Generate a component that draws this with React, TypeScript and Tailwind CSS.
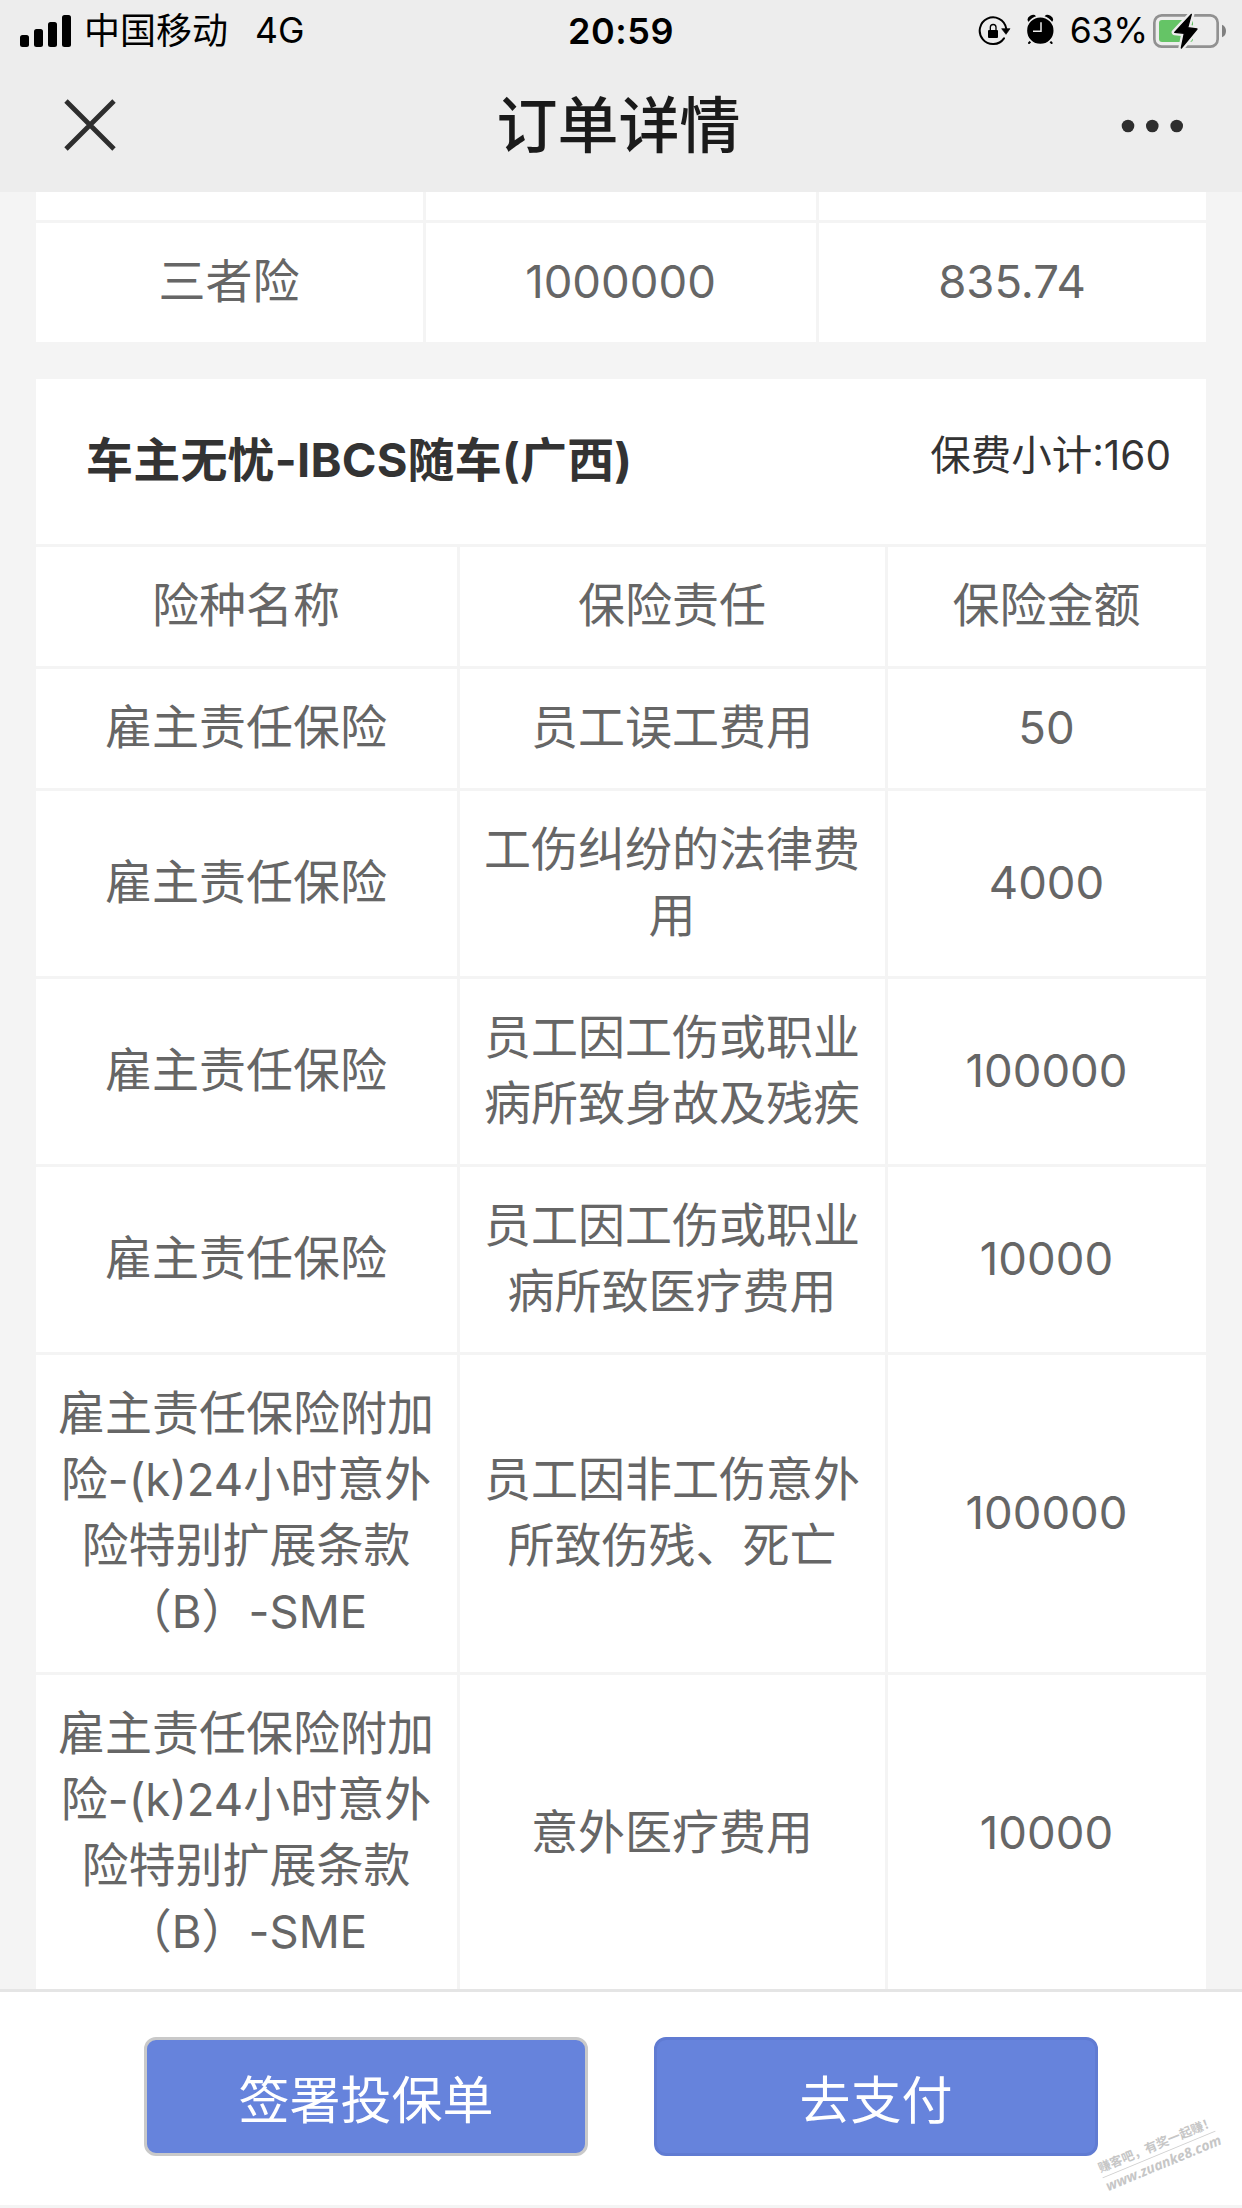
import React from "react";

interface CoverageRow {
  name: string;
  duty: string;
  amount: string;
}

const rows: CoverageRow[] = [
  { name: "险种名称", duty: "保险责任", amount: "保险金额" },
  { name: "雇主责任保险", duty: "员工误工费用", amount: "50" },
  { name: "雇主责任保险", duty: "工伤纠纷的法律费用", amount: "4000" },
  { name: "雇主责任保险", duty: "员工因工伤或职业病所致身故及残疾", amount: "100000" },
  { name: "雇主责任保险", duty: "员工因工伤或职业病所致医疗费用", amount: "10000" },
  {
    name: "雇主责任保险附加险-(k)24小时意外险特别扩展条款（B）-SME",
    duty: "员工因非工伤意外所致伤残、死亡",
    amount: "100000",
  },
  {
    name: "雇主责任保险附加险-(k)24小时意外险特别扩展条款（B）-SME",
    duty: "意外医疗费用",
    amount: "10000",
  },
];

function SignalIcon() {
  return (
    <svg className="w-[51px] h-8" viewBox="0 0 51 32" fill="#000">
      <rect x="0" y="20" width="9" height="12" rx="2.5" />
      <rect x="14" y="14" width="9" height="18" rx="2.5" />
      <rect x="28" y="7" width="9" height="25" rx="2.5" />
      <rect x="42" y="0" width="9" height="32" rx="2.5" />
    </svg>
  );
}

function RotationLockIcon() {
  return (
    <svg className="w-[33px] h-[33px]" viewBox="234 45 99 99" fill="none">
      <path d="M312 118A40 40 0 1 1 318.500 88" stroke="#000" strokeWidth="6" strokeLinecap="round" />
      <path d="M305 89h25l-12 17z" fill="#000" stroke="#000" strokeWidth="2" strokeLinejoin="round" />
      <rect x="264" y="93" width="30" height="24" rx="3" fill="#000" />
      <path d="M271 95v-10a8.500 8.500 0 0 1 17 0v10" stroke="#000" strokeWidth="4" />
    </svg>
  );
}

function AlarmIcon() {
  return (
    <svg className="w-[30px] h-[33px]" viewBox="378 45 90 99" fill="none">
      <ellipse cx="396" cy="59" rx="14" ry="10" transform="rotate(-33 396 59)" fill="#000" />
      <ellipse cx="446" cy="59" rx="14" ry="10" transform="rotate(33 446 59)" fill="#000" />
      <path d="M387 132l10-10M455 132l-10-10" stroke="#000" strokeWidth="6" strokeLinecap="round" />
      <circle cx="421" cy="95" r="42" fill="#000" stroke="#ededed" strokeWidth="5" />
      <path d="M423 70v27h-24" stroke="#ededed" strokeWidth="4.500" />
    </svg>
  );
}

function BatteryIcon() {
  return (
    <svg className="w-[75px] h-9" viewBox="756 36 225 108" fill="none">
      <rect x="763" y="43" width="190" height="94" rx="22" stroke="#919191" strokeWidth="8" />
      <path d="M966 71q12 5 12 19t-12 19z" fill="#808080" />
      <rect x="777" y="57" width="102" height="66" rx="9" fill="#65c466" />
      <path
        d="M874 40L824 94L853 97L844 141L891 84L863 80Z"
        fill="#000"
        stroke="#ededed"
        strokeWidth="18"
        strokeLinejoin="round"
      />
      <path
        d="M874 40L824 94L853 97L844 141L891 84L863 80Z"
        fill="#000"
        stroke="#000"
        strokeWidth="4"
        strokeLinejoin="round"
      />
    </svg>
  );
}

function StatusBar() {
  return (
    <div className="grid grid-cols-3 items-center h-[60px] pl-5 pr-[15px] text-[36px] leading-[60px] text-black">
      <div className="flex items-center">
        <SignalIcon />
        <span className="ml-[13px]">中国移动</span>
        <span className="ml-[27px] mt-px text-[35.5px]">4G</span>
      </div>
      <div className="-ml-[5px] mt-px text-center font-semibold tracking-[0.5px]">20:59</div>
      <div className="flex items-center justify-end">
        <RotationLockIcon />
        <span className="ml-[15px]">
          <AlarmIcon />
        </span>
        <span className="ml-[14px] mr-1 mt-px text-[35.5px] tracking-[-0.2px]">63%</span>
        <BatteryIcon />
      </div>
    </div>
  );
}

function NavBar() {
  return (
    <div className="flex items-center justify-between h-[132px] pl-16 pr-[58px]">
      <svg className="w-[52px] h-[52px] -mt-[3px]" viewBox="0 0 52 52" fill="none">
        <path d="M2 2l48 48M50 2L2 50" stroke="#2e2e2e" strokeWidth="4.800" />
      </svg>
      <h1 className="text-[61px] leading-[90px] font-medium text-[#1a1a1a]">订单详情</h1>
      <svg className="w-[63px] h-4 -mt-px" viewBox="0 0 63 16" fill="#2e2e2e">
        <circle cx="7" cy="8" r="6.300" />
        <circle cx="31.300" cy="8" r="6.300" />
        <circle cx="55.700" cy="8" r="6.300" />
      </svg>
    </div>
  );
}

// 英文和数字比中文略小一号
function MixedText({ text }: { text: string }) {
  return (
    <>
      {text.split(/([\x20-\x7e]+)/).map((part, i) =>
        i % 2 === 1 ? (
          <span key={i} className="text-[45.5px] leading-none">
            {part}
          </span>
        ) : (
          part
        )
      )}
    </>
  );
}

function Cell({ text }: { text: string }) {
  return (
    <div className="flex items-center justify-center bg-white pl-[19px] pr-5 pt-[25px] pb-7 text-center">
      <span>
        <MixedText text={text} />
      </span>
    </div>
  );
}

export default function App() {
  return (
    <div className="flex flex-col w-[1242px] h-[2208px] overflow-hidden bg-[#f4f4f4] font-['Inter','Noto_Sans_CJK_SC',sans-serif]">
      <header className="shrink-0 h-48 bg-[#ededed]">
        <StatusBar />
        <NavBar />
      </header>

      <main className="flex-1 min-h-0 overflow-hidden px-9 text-[47px] leading-[66px] text-[#666]">
        {/* 上一个险种表格的末尾 */}
        <div className="grid grid-cols-[387px_390px_387px] gap-[3px]">
          <div className="h-7 bg-white" />
          <div className="h-7 bg-white" />
          <div className="h-7 bg-white" />
          <Cell text="三者险" />
          <Cell text="1000000" />
          <Cell text="835.74" />
        </div>

        <section className="mt-[37px]">
          <div className="flex items-center justify-between h-[165px] pl-[50px] pr-[35px] bg-white text-[#333]">
            <h2 className="-mt-1 font-bold tracking-[0.2px]">车主无忧-IBCS随车(广西)</h2>
            <p className="text-[40.5px] -mt-3">保费小计:160</p>
          </div>
          <div className="grid grid-cols-[421px_425px_318px] gap-[3px] pt-[3px]">
            {rows.map((row, i) => (
              <React.Fragment key={i}>
                <Cell text={row.name} />
                <Cell text={row.duty} />
                <Cell text={row.amount} />
              </React.Fragment>
            ))}
          </div>
        </section>
      </main>

      <footer className="relative shrink-0 flex justify-between w-full h-[216px] mb-[3px] pt-[45px] px-36 bg-white border-t-[3px] border-[#e5e5e5]">
        <button className="w-[444px] h-[119px] pt-[9px] rounded-[12px] border-[3px] border-[#c9c9c9] bg-[#6683dc] text-[51px] text-white">
          签署投保单
        </button>
        <button className="w-[444px] h-[119px] pt-[9px] rounded-[12px] border-[3px] border-[#607bd2] bg-[#6683dc] text-[51px] text-white">
          去支付
        </button>

        {/* 水印 */}
        <div className="absolute left-[1098px] top-[144px] w-[122px] -rotate-[22.5deg] text-[#c6c6c6] font-bold whitespace-nowrap">
          <div className="text-[12.5px] leading-[18px] border-b border-[#d0d0d0]">赚客吧，有奖一起赚！</div>
          <div className="text-[14px] leading-[18px] font-['Open_Sans',sans-serif] italic">www.zuanke8.com</div>
        </div>
      </footer>
    </div>
  );
}
